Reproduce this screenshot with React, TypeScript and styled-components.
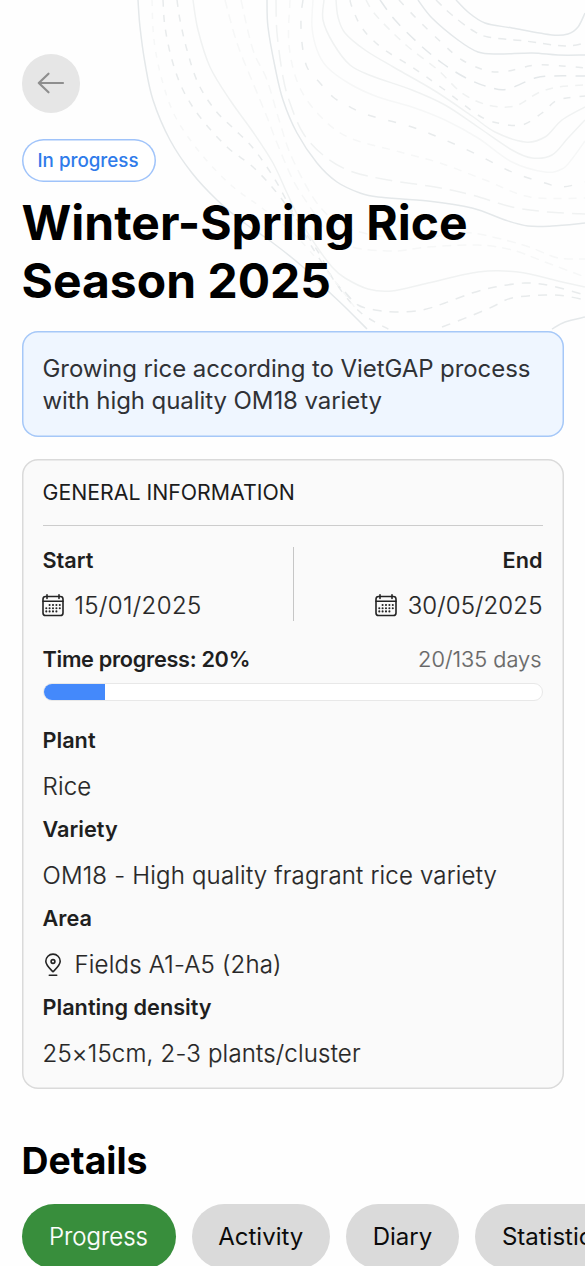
import React from 'react';
import styled, { createGlobalStyle } from 'styled-components';

const GlobalStyle = createGlobalStyle`
  * { box-sizing: border-box; }
  html, body { margin: 0; padding: 0; background: #fefefe; overflow: hidden; }
  body { font-family: Inter, "Liberation Sans", sans-serif; color: #212121; }
`;

const Screen = styled.main`
  position: relative;
  isolation: isolate;
  width: 585px;
  height: 1266px;
  padding: 54px 21.5px 0;
  overflow: hidden;
  display: flex;
  flex-direction: column;
  align-items: flex-start;

  > * {
    flex-shrink: 0;
  }
`;

const ContourArt = styled.svg`
  position: absolute;
  top: 0;
  left: 0;
  z-index: -1;
`;

const BackButton = styled.button`
  width: 58.5px;
  height: 58.5px;
  padding: 0;
  border: 0;
  border-radius: 50%;
  background: #e6e6e6;
  display: flex;
  align-items: center;
  justify-content: center;
`;

const StatusBadge = styled.span`
  margin-top: 26.5px;
  height: 43px;
  width: 134px;
  padding-right: 1px;
  box-shadow: inset 0 0 0 1.5px #9fc3fa;
  border-radius: 22px;
  background: #fff;
  color: #2f7bea;
  font-size: 18.8px;
  font-weight: 500;
  line-height: 44px;
  text-align: center;
`;

const Title = styled.h1`
  margin: 11.5px 0 0;
  font-size: 48px;
  line-height: 58.5px;
  font-weight: 700;
  color: #000;
  white-space: nowrap;
`;

const Summary = styled.p`
  margin: 20px 0 0;
  align-self: stretch;
  height: 106px;
  padding: 22px 21px;
  box-shadow: inset 0 0 0 1.5px #a6c8f8;
  border-radius: 16px;
  background: #eff6ff;
  font-size: 24px;
  letter-spacing: -0.08px;
  line-height: 32px;
  color: #303236;
  white-space: nowrap;
`;

const Card = styled.section`
  margin-top: 22px;
  align-self: stretch;
  height: 630.5px;
  padding: 1px 21px;
  box-shadow: inset 0 0 0 1.5px #dadada;
  border-radius: 16px;
  background: #fafafa;
  display: flex;
  flex-direction: column;
`;

const CardTitle = styled.h2`
  margin: 0;
  height: 66px;
  border-bottom: 1.5px solid #cccccc;
  font-size: 21.3px;
  line-height: 65px;
  font-weight: 400;
  color: #1c1c1c;
`;

const DateRow = styled.div`
  margin-top: 21px;
  height: 74px;
  display: flex;
  justify-content: space-between;
`;

const DateColumn = styled.div<{ $end?: boolean }>`
  width: 250px;
  display: flex;
  flex-direction: column;
  align-items: ${(p) => (p.$end ? 'flex-end' : 'flex-start')};
  border-left: ${(p) => (p.$end ? '1.5px solid #c6c6c6' : '0')};
`;

const Label = styled.h3<{ $lineHeight?: number; $tracking?: number }>`
  margin: 0;
  font-size: 21.7px;
  font-weight: 600;
  line-height: ${(p) => p.$lineHeight ?? 34}px;
  letter-spacing: ${(p) => p.$tracking ?? 0}px;
  color: #1f1f1f;
  white-space: nowrap;
`;

const Value = styled.div<{ $tracking?: number }>`
  display: flex;
  align-items: center;
  gap: 11px;
  height: 34px;
  font-size: 24px;
  font-weight: 300;
  line-height: 34px;
  letter-spacing: ${(p) => p.$tracking ?? 0.2}px;
  -webkit-text-stroke: 0.2px currentColor;
  color: #262626;
  white-space: nowrap;

  svg {
    margin-left: -1px;
  }
`;

const DateValue = styled(Value)`
  margin-top: 16px;
`;

const ProgressHeader = styled.div`
  margin-top: 21.5px;
  height: 34px;
  display: flex;
  justify-content: space-between;
  align-items: center;
`;

const DayCount = styled.span`
  padding-right: 1px;
  font-size: 21.8px;
  font-weight: 300;
  -webkit-text-stroke: 0.2px currentColor;
  color: #666;
`;

const ProgressTrack = styled.div`
  margin-top: 6.5px;
  height: 18.5px;
  border: 1.5px solid #e8e8e8;
  border-radius: 10px;
  background: #fff;
  overflow: hidden;
`;

const ProgressFill = styled.div<{ $width: number }>`
  width: ${(p) => p.$width}px;
  height: 100%;
  background: #4489fb;
`;

const FieldList = styled.div`
  margin-top: 22px;
  display: flex;
  flex-direction: column;
  gap: 8.6px;
`;

const Field = styled.div`
  display: flex;
  flex-direction: column;
  gap: 12.5px;
`;

const SectionTitle = styled.h2`
  margin: 48.5px 0 0;
  font-size: 37.4px;
  font-weight: 700;
  line-height: 46px;
  color: #000;
`;

const Tabs = styled.nav`
  margin-top: 20.5px;
  display: flex;
  gap: 16px;
`;

const Tab = styled.button<{ $active?: boolean; $width: number }>`
  flex: none;
  width: ${(p) => p.$width}px;
  height: 65px;
  padding: 0;
  border: 0;
  border-radius: 33px;
  background: ${(p) => (p.$active ? '#388e3c' : '#dadada')};
  color: ${(p) => (p.$active ? '#fff' : '#0b0b0b')};
  font-family: inherit;
  font-size: 24px;
  font-weight: ${(p) => (p.$active ? 300 : 400)};
  -webkit-text-stroke: ${(p) => (p.$active ? '0.2px currentColor' : '0')};
`;

type Point = [number, number];
interface Contour {
  points: Point[];
  tone: string;
  dash?: string;
}

const strong = '#e4e8ea';
const mid = '#e8ebec';
const soft = '#f0f2f2';
const faint = '#f6f7f7';

const contours: Contour[] = [
  { tone: strong, points: [[138, 0], [140, 27], [145, 63], [153, 100], [170, 140], [192, 173], [217, 200], [243, 222], [273, 243], [303, 267], [327, 290], [345, 307], [367, 329]] },
  { tone: mid, dash: '7 8', points: [[163, 0], [165, 27], [172, 60], [183, 90], [200, 117], [227, 147], [253, 167], [277, 193], [300, 225], [320, 255], [335, 282], [360, 312], [390, 330]] },
  { tone: mid, dash: '7 8', points: [[177, 0], [180, 20], [187, 50], [198, 83], [215, 110], [233, 128], [253, 148], [274, 178], [290, 207], [312, 247], [337, 284], [352, 300]] },
  { tone: faint, dash: '6 7', points: [[152, 0], [154, 40], [162, 80], [176, 118], [202, 155], [232, 186], [262, 208], [295, 235], [330, 275], [356, 309]] },
  { tone: soft, points: [[193, 0], [198, 30], [210, 67], [230, 100], [253, 132], [273, 163], [287, 193], [300, 220], [317, 247], [333, 268], [345, 278], [368, 289], [392, 291], [428, 283], [478, 272], [518, 272], [558, 281], [585, 287]] },
  { tone: faint, dash: '9 6', points: [[225, 0], [237, 43], [253, 83], [267, 117], [277, 143], [293, 180], [310, 207], [327, 231], [352, 247], [395, 251], [428, 247], [478, 245], [512, 250], [545, 262], [585, 277]] },
  { tone: faint, dash: '9 6', points: [[241, 0], [253, 50], [267, 80], [280, 123], [293, 160], [320, 207], [353, 230], [410, 239], [450, 234], [472, 233], [505, 240], [532, 248], [558, 258], [585, 259]] },
  { tone: strong, points: [[267, 0], [268, 27], [275, 67], [283, 100], [297, 133], [317, 163], [337, 182], [360, 193], [378, 197], [428, 201], [472, 208], [505, 220], [528, 226], [552, 226], [585, 223]] },
  { tone: soft, dash: '17 8', points: [[276, 0], [277, 33], [283, 77], [290, 103], [303, 133], [323, 155], [350, 171], [388, 180], [435, 187], [472, 195], [512, 207], [548, 212], [585, 214]] },
  { tone: mid, dash: '8 13', points: [[303, 0], [301, 17], [302, 43], [307, 67], [320, 83], [333, 97], [348, 106], [368, 115], [412, 127], [445, 140], [478, 155], [512, 172], [545, 183], [562, 187], [585, 182]] },
  { tone: faint, dash: '8 7', points: [[290, 0], [289, 45], [299, 86], [321, 117], [350, 138], [400, 152], [440, 163], [485, 180], [530, 197], [585, 198]] },
  { tone: faint, points: [[313, 0], [312, 27], [317, 50], [327, 67], [350, 84], [378, 97], [412, 107], [445, 120], [478, 138], [512, 162], [545, 172], [562, 169], [572, 159], [585, 141]] },
  { tone: soft, points: [[324, 0], [323, 20], [333, 43], [350, 65], [372, 76], [412, 90], [445, 105], [478, 127], [512, 150], [532, 158], [552, 155], [568, 138], [585, 120]] },
  { tone: soft, points: [[336, 0], [338, 17], [345, 33], [365, 50], [395, 68], [435, 91], [472, 116], [495, 132], [525, 142], [545, 137], [562, 120], [585, 107]] },
  { tone: mid, dash: '7 9', points: [[350, 0], [352, 7], [362, 28], [382, 48], [412, 67], [442, 88], [478, 115], [498, 123], [522, 125], [542, 113], [558, 100], [585, 96]] },
  { tone: soft, dash: '8 7', points: [[366, 0], [374, 13], [392, 32], [412, 50], [438, 70], [462, 93], [488, 105], [515, 106], [538, 93], [558, 87], [585, 85]] },
  { tone: strong, dash: '12 9', points: [[380, 0], [395, 20], [418, 43], [442, 63], [468, 79], [492, 88], [508, 89], [535, 78], [552, 76], [585, 76]] },
  { tone: mid, dash: '7 10', points: [[399, 0], [418, 20], [442, 43], [462, 60], [488, 71], [508, 71], [535, 65], [562, 66], [585, 68]] },
  { tone: strong, points: [[418, 0], [432, 18], [458, 40], [478, 52], [498, 54], [532, 53], [558, 55], [585, 55]] },
  { tone: mid, dash: '8 7', points: [[436, 0], [452, 15], [472, 30], [488, 37], [525, 41], [565, 46], [585, 43]] },
  { tone: strong, points: [[456, 0], [468, 12], [485, 23], [512, 28], [552, 35], [568, 34], [578, 27], [585, 13]] },
  { tone: mid, dash: '9 8', points: [[345, 292], [358, 305], [375, 310], [395, 312], [422, 310], [445, 303], [472, 293], [495, 287], [525, 283], [552, 286], [585, 295]] },
  { tone: mid, dash: '9 8', points: [[442, 327], [468, 317], [492, 307], [512, 298], [545, 295], [565, 296], [585, 300]] },
  { tone: strong, points: [[552, 329], [565, 322], [585, 317]] },
];

/* Catmull-Rom spline through the points, written as cubic segments. */
function smooth(points: Point[]): string {
  let d = `M${points[0][0]} ${points[0][1]}`;
  for (let i = 0; i < points.length - 1; i++) {
    const a = points[i - 1] ?? points[i];
    const b = points[i];
    const c = points[i + 1];
    const e = points[i + 2] ?? c;
    d += `C${b[0] + (c[0] - a[0]) / 6} ${b[1] + (c[1] - a[1]) / 6} ${c[0] - (e[0] - b[0]) / 6} ${c[1] - (e[1] - b[1]) / 6} ${c[0]} ${c[1]}`;
  }
  return d;
}

const ArrowIcon = () => (
  <svg width="28" height="24" viewBox="0 0 28 24" fill="none" stroke="#8e8e8e" strokeWidth="2.2" strokeLinecap="round" strokeLinejoin="round">
    <path d="M26 12H1.800M11.500 2.700L1.800 12l9.700 9.300" />
  </svg>
);

const dotRows: [number, number[]][] = [
  [11, [7.2, 10.6, 14, 17.4]],
  [14.2, [3.9, 7.2, 10.6, 14, 17.4]],
  [17.4, [3.9, 7.2, 10.6, 14]],
];

const CalendarIcon = () => (
  <svg width="22" height="23" viewBox="0 0 22 23" fill="none" stroke="#242424" strokeWidth="1.6" strokeLinecap="round">
    <rect x="1" y="2.500" width="20" height="19" rx="2.600" />
    <path d="M1 7.300h20M5 0.800v3.700M17 0.800v3.700" />
    {dotRows.map(([y, xs]) =>
      xs.map((x) => <circle key={`${x}-${y}`} cx={x + 0.4} cy={y} r="1.05" fill="#242424" stroke="none" />),
    )}
  </svg>
);

const PinIcon = () => (
  <svg width="22" height="24" viewBox="0 0 22 24" fill="none" stroke="#242424" strokeWidth="1.6" strokeLinecap="round">
    <path d="M11 18.800C8.500 16.300 3.800 12.300 3.800 8.300a7.200 7.200 0 0 1 14.400 0c0 4-4.700 8-7.200 10.500z" strokeLinejoin="round" />
    <circle cx="11" cy="8.500" r="1.900" />
    <path d="M7.300 22.200h7.400" />
  </svg>
);

const fields = [
  { label: 'Plant', value: 'Rice' },
  { label: 'Variety', value: 'OM18 - High quality fragrant rice variety' },
  { label: 'Area', value: 'Fields A1-A5 (2ha)', icon: <PinIcon /> },
  { label: 'Planting density', value: '25×15cm, 2-3 plants/cluster' },
];

const tabs = [
  { name: 'Progress', width: 154 },
  { name: 'Activity', width: 138.5 },
  { name: 'Diary', width: 113 },
  { name: 'Statistics', width: 157 },
];

export default function App() {
  return (
    <>
      <GlobalStyle />
      <Screen>
        <ContourArt width="585" height="331" viewBox="0 0 585 331" fill="none">
          {contours.map((c, i) => (
            <path key={i} d={smooth(c.points)} stroke={c.tone} strokeWidth="1.5" strokeDasharray={c.dash} />
          ))}
        </ContourArt>
        <BackButton aria-label="Back">
          <ArrowIcon />
        </BackButton>
        <StatusBadge>In progress</StatusBadge>
        <Title>
          Winter-Spring Rice
          <br />
          Season 2025
        </Title>
        <Summary>
          Growing rice according to VietGAP process
          <br />
          with high quality OM18 variety
        </Summary>
        <Card>
          <CardTitle>GENERAL INFORMATION</CardTitle>
          <DateRow>
            <DateColumn>
              <Label $lineHeight={26}>Start</Label>
              <DateValue $tracking={0.4}>
                <CalendarIcon />
                15/01/2025
              </DateValue>
            </DateColumn>
            <DateColumn $end>
              <Label $lineHeight={26}>End</Label>
              <DateValue $tracking={0.12}>
                <CalendarIcon />
                30/05/2025
              </DateValue>
            </DateColumn>
          </DateRow>
          <ProgressHeader>
            <Label $tracking={-0.3}>Time progress: 20%</Label>
            <DayCount>20/135 days</DayCount>
          </ProgressHeader>
          <ProgressTrack>
            <ProgressFill $width={61} />
          </ProgressTrack>
          <FieldList>
            {fields.map((f) => (
              <Field key={f.label}>
                <Label>{f.label}</Label>
                <Value>
                  {f.icon}
                  {f.value}
                </Value>
              </Field>
            ))}
          </FieldList>
        </Card>
        <SectionTitle>Details</SectionTitle>
        <Tabs>
          {tabs.map((t, i) => (
            <Tab key={t.name} $active={i === 0} $width={t.width}>
              {t.name}
            </Tab>
          ))}
        </Tabs>
      </Screen>
    </>
  );
}
